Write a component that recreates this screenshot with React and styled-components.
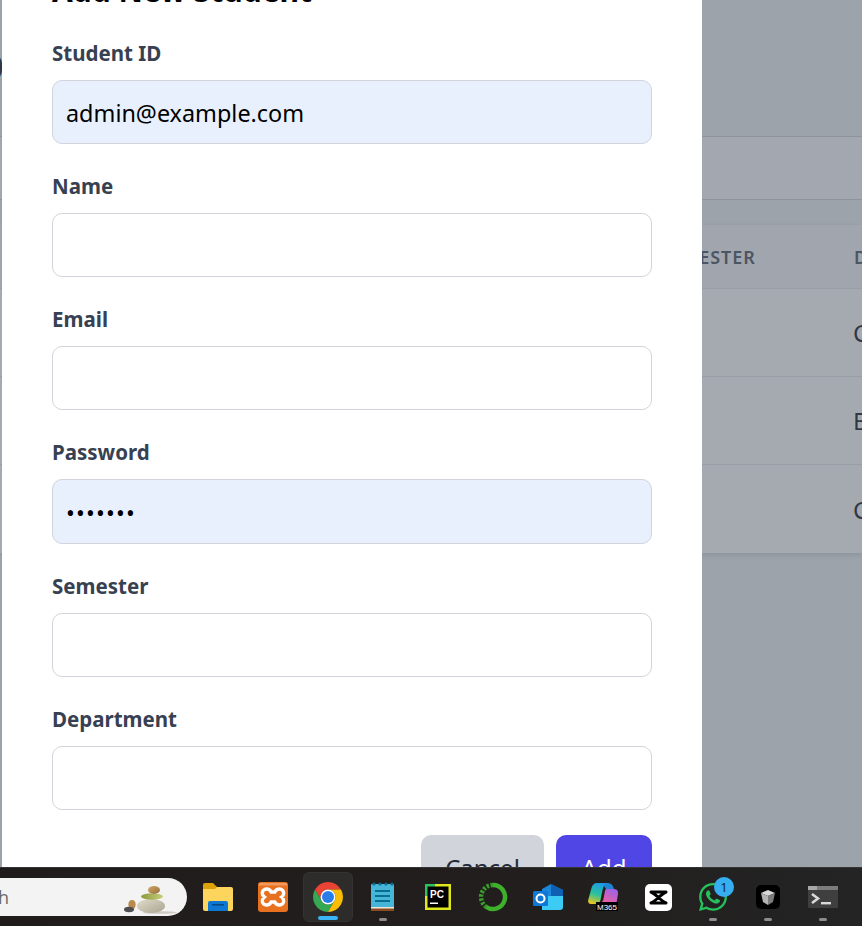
import React from "react";
import styled, { createGlobalStyle } from "styled-components";
import { FaWhatsapp } from "react-icons/fa";

const Global = createGlobalStyle`
  html, body { margin: 0; padding: 0; background: #1f1c1b; }
  * { box-sizing: border-box; }
`;

const Screen = styled.div`
  width: 862px;
  height: 926px;
  display: flex;
  flex-direction: column;
  overflow: hidden;
  font-family: "Noto Sans", "Open Sans", sans-serif;
`;

const Viewport = styled.div`
  position: relative;
  height: 867px;
  overflow: hidden;
  background: #edf0f2;
`;

const PageHeader = styled.header`
  height: 137px;
  padding-top: 42px;
  border-bottom: 1px solid #d0d3d9;
  overflow: hidden;
`;

const PageTitle = styled.div`
  margin-left: -27px;
  font-size: 40px;
  line-height: 48px;
  font-weight: 700;
  color: #111827;
`;

const FilterBar = styled.div`
  height: 63px;
  background: #fbfbfc;
  border-bottom: 1px solid #d0d3d9;
`;

const Table = styled.div`
  margin-top: 25px;
  background: #fff;
  box-shadow: 0 2px 5px rgba(0, 0, 0, 0.14);
`;

const Row = styled.div`
  display: flex;
  align-items: center;
  height: ${(p) => p.$h}px;
  background: ${(p) => (p.$head ? "#f6f7f8" : "#fff")};
  border-bottom: ${(p) => (p.$last ? "0" : "1px solid #e5e7eb")};
`;

const HeadCell = styled.div`
  flex: none;
  font-size: 18px;
  font-weight: 600;
  letter-spacing: 0.9px;
  color: #4b5563;
  white-space: nowrap;
`;

const SemesterHead = styled(HeadCell)`
  width: 854px;
  padding-left: 660px;
`;

const Cell = styled.div`
  padding-left: 853px;
  font-size: 24px;
  color: #111827;
  white-space: nowrap;
`;

const Overlay = styled.div`
  position: absolute;
  inset: 0;
  background: rgba(75, 85, 99, 0.5);
`;

const Modal = styled.form`
  position: absolute;
  top: 0;
  left: 2px;
  width: 700px;
  height: 920px;
  padding: 0 50px;
  background: #fff;
`;

const ModalTitle = styled.h2`
  margin: -29px 0 0;
  height: 68.7px;
  font-size: 30px;
  line-height: 40px;
  font-weight: 700;
  color: #000;
`;

const Field = styled.div`
  display: flex;
  flex-direction: column;
  height: 133.25px;
`;

const Label = styled.label`
  display: block;
  flex: none;
  height: 40px;
  padding-top: 1px;
  font-size: 20.500px;
  line-height: 24px;
  font-weight: 700;
  color: #374151;
`;

const Input = styled.input`
  display: block;
  flex: none;
  width: 100%;
  height: 64.300px;
  padding: ${(p) => (p.$secret ? "3px" : "2px")} 13px 0;
  border: 1px solid #d1d5db;
  border-radius: 10px;
  background: ${(p) => (p.$filled ? "#e8f0fe" : "#fff")};
  font-family: "Noto Sans", sans-serif;
  font-size: 23.400px;
  letter-spacing: ${(p) => (p.$secret ? "1.200px" : "0")};
  color: #000;
  outline: none;
`;

const Actions = styled.div`
  display: flex;
  justify-content: flex-end;
  gap: 12px;
  margin-top: -4px;
`;

const Button = styled.button`
  height: 64px;
  width: ${(p) => p.$w}px;
  border: 0;
  border-radius: 10px;
  font-family: "Noto Sans", sans-serif;
  font-size: 24px;
  color: ${(p) => (p.$primary ? "#fff" : "#1f2937")};
  background: ${(p) => (p.$primary ? "#4f46e5" : "#d1d5db")};
`;

const Taskbar = styled.div`
  height: 59px;
  display: flex;
  align-items: flex-start;
  background: linear-gradient(90deg, #1f1c1b 0%, #211e1d 60%, #242424 100%);
  border-top: 1px solid #353535;
  padding-top: 4px;
`;

const Search = styled.div`
  width: 207px;
  height: 38px;
  margin: 6px 6px 0 -20px;
  border-radius: 19px;
  background: #f3f3f3;
  display: flex;
  align-items: center;
  padding-right: 9px;
  font-family: "Open Sans", sans-serif;
  font-size: 18px;
  color: #6a6a6a;
  flex: none;
  overflow: hidden;
`;

const SearchText = styled.span`
  flex: none;
  margin-left: -28px;
`;

const PebbleBox = styled.div`
  flex: none;
  margin-left: auto;
  height: 28px;
  margin-top: 6px;
`;

const Tray = styled.div`
  display: flex;
  gap: 5px;
`;

const Slot = styled.div`
  position: relative;
  width: 50px;
  height: 50px;
  flex: none;
  display: flex;
  align-items: center;
  justify-content: center;
  border-radius: 6px;
  background: ${(p) => (p.$active ? "#2e2c2b" : "transparent")};
  border: ${(p) => (p.$active ? "1px solid #353331" : "0")};
`;

const Indicator = styled.span`
  position: absolute;
  left: 50%;
  bottom: 1px;
  transform: translateX(-50%);
  width: ${(p) => (p.$active ? 20 : 8)}px;
  height: ${(p) => (p.$active ? 4 : 3)}px;
  border-radius: 2px;
  background: ${(p) => (p.$active ? "#3bb4f5" : "#8d8d8d")};
`;

const Badge = styled.span`
  position: absolute;
  top: 5px;
  left: 26px;
  width: 20px;
  height: 20px;
  border-radius: 50%;
  background: #36aef2;
  color: #12222c;
  font-family: "Open Sans", sans-serif;
  font-size: 13px;
  line-height: 20px;
  text-align: center;
`;

const WhatsIcon = styled(FaWhatsapp)`
  color: #25c15a;
  width: 32px;
  height: 32px;
  margin-top: -1px;
`;

const Pebbles = () => (
  <svg width="54" height="28" viewBox="0 0 54 28">
    <defs>
      <linearGradient id="stone" x1="0" y1="0" x2="1" y2="1">
        <stop offset="0" stopColor="#e2dccb" />
        <stop offset="1" stopColor="#a9a392" />
      </linearGradient>
      <linearGradient id="moss" x1="0" y1="0" x2="1" y2="0">
        <stop offset="0" stopColor="#8d9a3c" />
        <stop offset="1" stopColor="#c7cd7a" />
      </linearGradient>
      <linearGradient id="tan" x1="0" y1="0" x2="1" y2="1">
        <stop offset="0" stopColor="#d3a765" />
        <stop offset="1" stopColor="#94703f" />
      </linearGradient>
    </defs>
    <ellipse cx="36" cy="26.500" rx="17" ry="1.300" fill="#cfcbc3" />
    <ellipse cx="8" cy="18.500" rx="3.600" ry="4.500" fill="#b98a4c" />
    <ellipse cx="5" cy="23.500" rx="5" ry="2.700" fill="#4d4d52" />
    <ellipse cx="27" cy="20" rx="14" ry="7" fill="url(#stone)" />
    <ellipse cx="28" cy="10.500" rx="11" ry="3.200" fill="url(#moss)" />
    <ellipse cx="30" cy="4" rx="6" ry="3.900" fill="url(#tan)" />
  </svg>
);

const Folder = () => (
  <svg width="30" height="28" viewBox="0 0 30 28">
    <path d="M0 2a2 2 0 0 1 2-2h8l4 4v4H0z" fill="#dca208" />
    <path d="M0 6h12l2-2h14a2 2 0 0 1 2 2v20a2 2 0 0 1-2 2H2a2 2 0 0 1-2-2z" fill="#fdd55d" />
    <path d="M5 20a2 2 0 0 1 2-2h16a2 2 0 0 1 2 2v8H5z" fill="#0c78d4" />
    <rect x="9" y="21" width="12" height="1.600" fill="#0a4a85" />
  </svg>
);

const Xampp = () => (
  <svg width="30" height="30" viewBox="0 0 30 30">
    <rect width="30" height="30" rx="3" fill="#e7711f" />
    <rect x="1" y="1" width="28" height="2.500" fill="#f09a5e" />
    <path
      d="M8.500 7c2.500 0 4 1.500 4.700 3h3.600c.7-1.500 2.200-3 4.700-3 2.800 0 4.200 2.100 4.200 4.200 0 1.700-.9 2.900-2.100 3.800 1.200.9 2.100 2.100 2.100 3.800 0 2.100-1.400 4.200-4.200 4.200-2.500 0-4-1.500-4.700-3h-3.600c-.7 1.500-2.200 3-4.700 3-2.800 0-4.200-2.100-4.200-4.200 0-1.700.9-2.900 2.100-3.800-1.200-.9-2.100-2.100-2.100-3.800C4.300 9.100 5.700 7 8.500 7z"
      fill="none"
      stroke="#fff"
      strokeWidth="3.400"
    />
  </svg>
);

const Chrome = () => (
  <svg width="30" height="30" viewBox="4 4 40 40">
    <path d="M41.320 14H24A10 10 0 0 0 15.340 29L6.680 14A20 20 0 0 1 41.320 14z" fill="#ea4335" />
    <path d="M6.680 14L15.340 29A10 10 0 0 0 32.660 29L24 44A20 20 0 0 1 6.680 14z" fill="#34a853" />
    <path d="M24 44L32.660 29A10 10 0 0 0 24 14H41.320A20 20 0 0 1 24 44z" fill="#fbbc04" />
    <circle cx="24" cy="24" r="10" fill="#fff" />
    <circle cx="24" cy="24" r="8" fill="#2a7de8" />
  </svg>
);

const Notes = () => (
  <svg width="24" height="30" viewBox="0 0 24 30">
    <rect y="2" width="23" height="26" rx="1" fill="#45b5d8" />
    <rect y="26" width="23" height="3" fill="#8a4a22" />
    <rect y="25" width="23" height="1.500" fill="#f0e6d8" />
    {[2, 8, 14, 20].map((x) => (
      <circle key={x} cx={x + 1} cy="2" r="1.600" fill="#0b6d90" />
    ))}
    <rect x="4" y="8" width="15" height="2" fill="#0b6d90" />
    <rect x="4" y="13" width="15" height="2" fill="#0b6d90" />
    <rect x="4" y="18" width="15" height="2" fill="#0b6d90" />
  </svg>
);

const PyCharm = () => (
  <svg width="26" height="26" viewBox="0 0 26 26">
    <rect width="26" height="26" fill="#dfe61c" />
    <rect x="0" y="0" width="10" height="12" fill="#2fc25a" />
    <rect x="2.500" y="2.500" width="21" height="21" fill="#000" />
    <text x="5" y="13.500" fontFamily="Liberation Sans" fontWeight="700" fontSize="10" fill="#fff">PC</text>
    <rect x="5" y="18.500" width="8" height="1.500" fill="#fff" />
  </svg>
);

const Ring = () => (
  <svg width="30" height="30" viewBox="0 0 30 30">
    <path d="M15 3a12 12 0 1 1-7 21.700" fill="none" stroke="#3fb02c" strokeWidth="4.500" />
    <path d="M15 3a12 12 0 0 0-7 21.700" fill="none" stroke="#3a9c2b" strokeWidth="4.500" strokeDasharray="2.500 1.500" />
  </svg>
);

const Outlook = () => (
  <svg width="30" height="26" viewBox="0 0 30 26">
    <path d="M9 5l9-5 12 6v6H9z" fill="#1a86d9" />
    <path d="M18 0l12 6v6H18z" fill="#0f5fb3" />
    <path d="M9 12h21v11a3 3 0 0 1-3 3H9z" fill="#3ccbf4" />
    <rect y="7" width="15" height="15" rx="1.500" fill="#0f78d4" />
    <circle cx="7.500" cy="14.500" r="4" fill="none" stroke="#fff" strokeWidth="2" />
  </svg>
);

const Copilot = () => (
  <svg width="30" height="30" viewBox="0 0 30 30">
    <defs>
      <linearGradient id="copA" x1="0.600" y1="0" x2="0.300" y2="1">
        <stop offset="0" stopColor="#1c9be8" />
        <stop offset="0.550" stopColor="#2cc29a" />
        <stop offset="1" stopColor="#e9c51f" />
      </linearGradient>
      <linearGradient id="copB" x1="0.800" y1="0" x2="0.200" y2="1">
        <stop offset="0" stopColor="#9a63ea" />
        <stop offset="1" stopColor="#f25f9c" />
      </linearGradient>
    </defs>
    <path d="M9 1h11c-3 .5-4.500 3-5.500 7l-2 10c-.7 3-2.500 4-5.500 4H3c-2 0-3.300-1.800-2.800-4L3.500 6C4.300 3 6 1 9 1z" fill="url(#copA)" />
    <path d="M14 1h6c3 0 5 2 6 6H18z" fill="#1f8fe6" opacity="0.9" />
    <path d="M18 7h8c3 0 4.500 2 4 5l-1.500 9H12c2-.5 3-2 3.500-4l1-5.500C17 9 17 8 18 7z" fill="url(#copB)" />
    <rect x="8" y="20" width="22" height="9" fill="#000" />
    <text x="9" y="27.500" fontFamily="Liberation Sans" fontWeight="400" fontSize="8" fill="#fff">M365</text>
  </svg>
);

const CapCut = () => (
  <svg width="27" height="27" viewBox="0 0 27 27">
    <rect width="27" height="27" rx="5" fill="#fff" />
    <path d="M6 8h15M6 19h15M6 8c5 2 10 9 15 11M21 8c-5 2-10 9-15 11" stroke="#000" strokeWidth="3" fill="none" strokeLinecap="round" />
  </svg>
);

const Cube = () => (
  <svg width="24" height="24" viewBox="0 0 24 24">
    <rect width="24" height="24" rx="5" fill="#000" />
    <path d="M5 8l7-3 7 3-7 3z" fill="#d8d8d8" />
    <path d="M5 8l7 3v9l-5-3z" fill="#b4b4b4" />
    <path d="M19 8l-7 3v9l5-3z" fill="#7c7c7c" />
  </svg>
);

const Terminal = () => (
  <svg width="30" height="22" viewBox="0 0 30 22">
    <rect width="30" height="22" rx="1.500" fill="#3f3f3f" />
    <rect width="30" height="4" fill="#7c7c7c" />
    <rect width="9" height="4" fill="#a8a8a8" />
    <path d="M4 8l6 4.500-6 4.500" fill="none" stroke="#d8d8d8" strokeWidth="2.600" />
    <rect x="13" y="16" width="10" height="2.400" fill="#d8d8d8" />
  </svg>
);

const fields = [
  { label: "Student ID", value: "admin@example.com", filled: true },
  { label: "Name" },
  { label: "Email", type: "email" },
  { label: "Password", type: "password", value: "1234567", filled: true, secret: true },
  { label: "Semester" },
  { label: "Department" },
];

const apps = [
  { id: "folder", icon: <Folder /> },
  { id: "xampp", icon: <Xampp /> },
  { id: "chrome", icon: <Chrome />, active: true },
  { id: "notes", icon: <Notes />, dot: true },
  { id: "pycharm", icon: <PyCharm /> },
  { id: "ring", icon: <Ring /> },
  { id: "outlook", icon: <Outlook /> },
  { id: "copilot", icon: <Copilot /> },
  { id: "capcut", icon: <CapCut /> },
  { id: "whatsapp", icon: <WhatsIcon />, dot: true, badge: "1" },
  { id: "cube", icon: <Cube />, dot: true },
  { id: "terminal", icon: <Terminal />, dot: true },
];

export default function App() {
  return (
    <Screen>
      <Global />
      <Viewport>
        <PageHeader>
          <PageTitle>O</PageTitle>
        </PageHeader>
        <FilterBar />
        <Table>
          <Row $h={64} $head>
            <SemesterHead>SEMESTER</SemesterHead>
            <HeadCell>DEPARTMENT</HeadCell>
          </Row>
          <Row $h={88}><Cell>CS</Cell></Row>
          <Row $h={88}><Cell>EE</Cell></Row>
          <Row $h={88} $last><Cell>CS</Cell></Row>
        </Table>
        <Overlay />
        <Modal>
          <ModalTitle>Add New Student</ModalTitle>
          {fields.map((f) => (
            <Field key={f.label}>
              <Label>{f.label}</Label>
              <Input
                type={f.type || "text"}
                defaultValue={f.value || ""}
                $filled={f.filled}
                $secret={f.secret}
                readOnly
              />
            </Field>
          ))}
          <Actions>
            <Button type="button" $w={123}>Cancel</Button>
            <Button type="button" $w={96} $primary>Add</Button>
          </Actions>
        </Modal>
      </Viewport>
      <Taskbar>
        <Search>
          <SearchText>Search</SearchText>
          <PebbleBox><Pebbles /></PebbleBox>
        </Search>
        <Tray>
          {apps.map((a) => (
            <Slot key={a.id} $active={a.active}>
              {a.icon}
              {a.badge && <Badge>{a.badge}</Badge>}
              {(a.dot || a.active) && <Indicator $active={a.active} />}
            </Slot>
          ))}
        </Tray>
      </Taskbar>
    </Screen>
  );
}
